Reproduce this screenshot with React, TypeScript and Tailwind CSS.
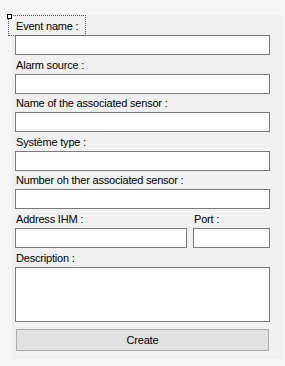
import React from "react";

const FONT = "font-['Liberation_Sans',Arial,sans-serif]";

function Label({ text, selected }: { text: string; selected?: boolean }) {
  return (
    <div className="relative h-[13px] pl-px text-[11px] leading-[13px] tracking-[-0.2px] text-black">
      {selected && (
        <>
          <div className="absolute left-[-7px] top-[-5px] h-[21px] w-[78px] border border-dotted border-[#555]" />
          <div className="absolute left-[-8px] top-[-6px] h-[5px] w-[5px] border border-black bg-white" />
        </>
      )}
      <span className="relative">{text}</span>
    </div>
  );
}

function TextBox({ className = "" }: { className?: string }) {
  return <div className={`h-[20px] border border-[#7a7a7a] bg-white ${className}`} />;
}

export default function App() {
  return (
    <div className={`h-[366px] w-[285px] bg-[#f5f5f5] pl-[12px] pt-[14px] ${FONT}`}>
      <div className="flex h-[345px] w-[270px] flex-col bg-[#f0f0f0] pl-[3px] pt-[6px]">
        <Label text="Event name :" selected />
        <TextBox className="mt-[2px] w-[255px]" />

        <div className="mt-[4px]">
          <Label text="Alarm source :" />
        </div>
        <TextBox className="mt-[2px] w-[255px]" />

        <div className="mt-[3px]">
          <Label text="Name of the associated sensor :" />
        </div>
        <TextBox className="mt-[2px] w-[255px]" />

        <div className="mt-[4px]">
          <Label text="Système type :" />
        </div>
        <TextBox className="mt-[2px] w-[255px]" />

        <div className="mt-[3px]">
          <Label text="Number oh ther associated sensor :" />
        </div>
        <TextBox className="mt-[2px] w-[255px]" />

        <div className="mt-[4px] flex gap-[6px]">
          <div className="flex w-[172px] flex-col">
            <Label text="Address IHM :" />
            <TextBox className="mt-[2px] w-[172px]" />
          </div>
          <div className="flex w-[77px] flex-col">
            <Label text="Port :" />
            <TextBox className="mt-[2px] w-[77px]" />
          </div>
        </div>

        <div className="mt-[4px]">
          <Label text="Description :" />
        </div>
        <div className="mt-[2px] h-[55px] w-[255px] border border-[#7a7a7a] bg-white" />

        <button className="ml-px mt-[7px] flex h-[22px] w-[253px] items-center justify-center border border-[#adadad] bg-[#e1e1e1] text-[11px] leading-[13px] tracking-[-0.2px] text-black">
          Create
        </button>
      </div>
    </div>
  );
}
